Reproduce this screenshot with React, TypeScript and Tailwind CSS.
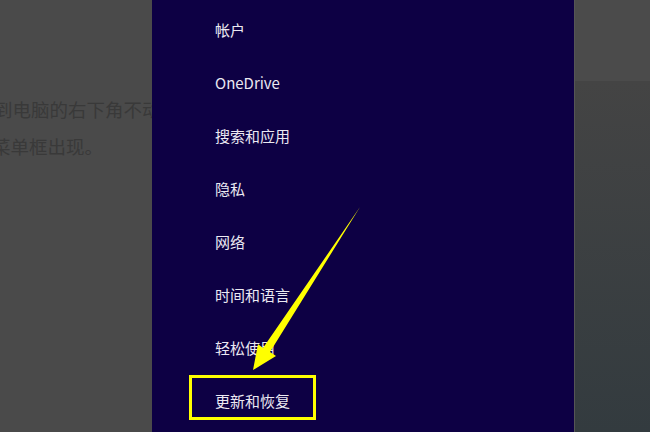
const items = [
  "帐户",
  "OneDrive",
  "搜索和应用",
  "隐私",
  "网络",
  "时间和语言",
  "轻松使用",
  "更新和恢复",
];

const cjk = { fontFamily: '"Noto Sans CJK SC", "Noto Sans", sans-serif' };

/** Settings charm over a dimmed article, with an annotation arrow. */
export default function App() {
  return (
    <div
      className="relative flex h-[432px] w-[650px] overflow-hidden bg-[#4a4a4a]"
      style={cjk}
    >
      <div className="w-[152px] shrink-0 overflow-hidden pt-[91px] text-[18.5px] leading-[37px] text-[#393939]">
        <p className="-ml-[6px] whitespace-nowrap">到电脑的右下角不动</p>
        <p className="-ml-[8px] whitespace-nowrap">菜单框出现。</p>
      </div>

      <div className="relative w-[422px] shrink-0 bg-[#0d0044] pt-[3px]">
        <ul className="pl-[63px] text-[15px] leading-[53px] text-[#ebe9f2]">
          {items.map((label) => (
            <li key={label}>{label}</li>
          ))}
        </ul>
        <div className="absolute left-[37px] top-[375px] h-[45px] w-[127px] border-[3px] border-[#ffff00]" />
      </div>

      <div className="flex flex-1 flex-col border-l border-[#555]">
        <div className="h-[81px] bg-[#4b4b4b]" />
        <div className="flex-1 bg-gradient-to-b from-[#444] to-[#333b3f]" />
      </div>

      <svg
        className="pointer-events-none absolute left-0 top-0"
        width="650"
        height="432"
        viewBox="0 0 650 432"
      >
        <polygon
          points="360,207 270,352 276,356 253,370 258,344 263,348"
          fill="#ffff00"
        />
      </svg>
    </div>
  );
}
